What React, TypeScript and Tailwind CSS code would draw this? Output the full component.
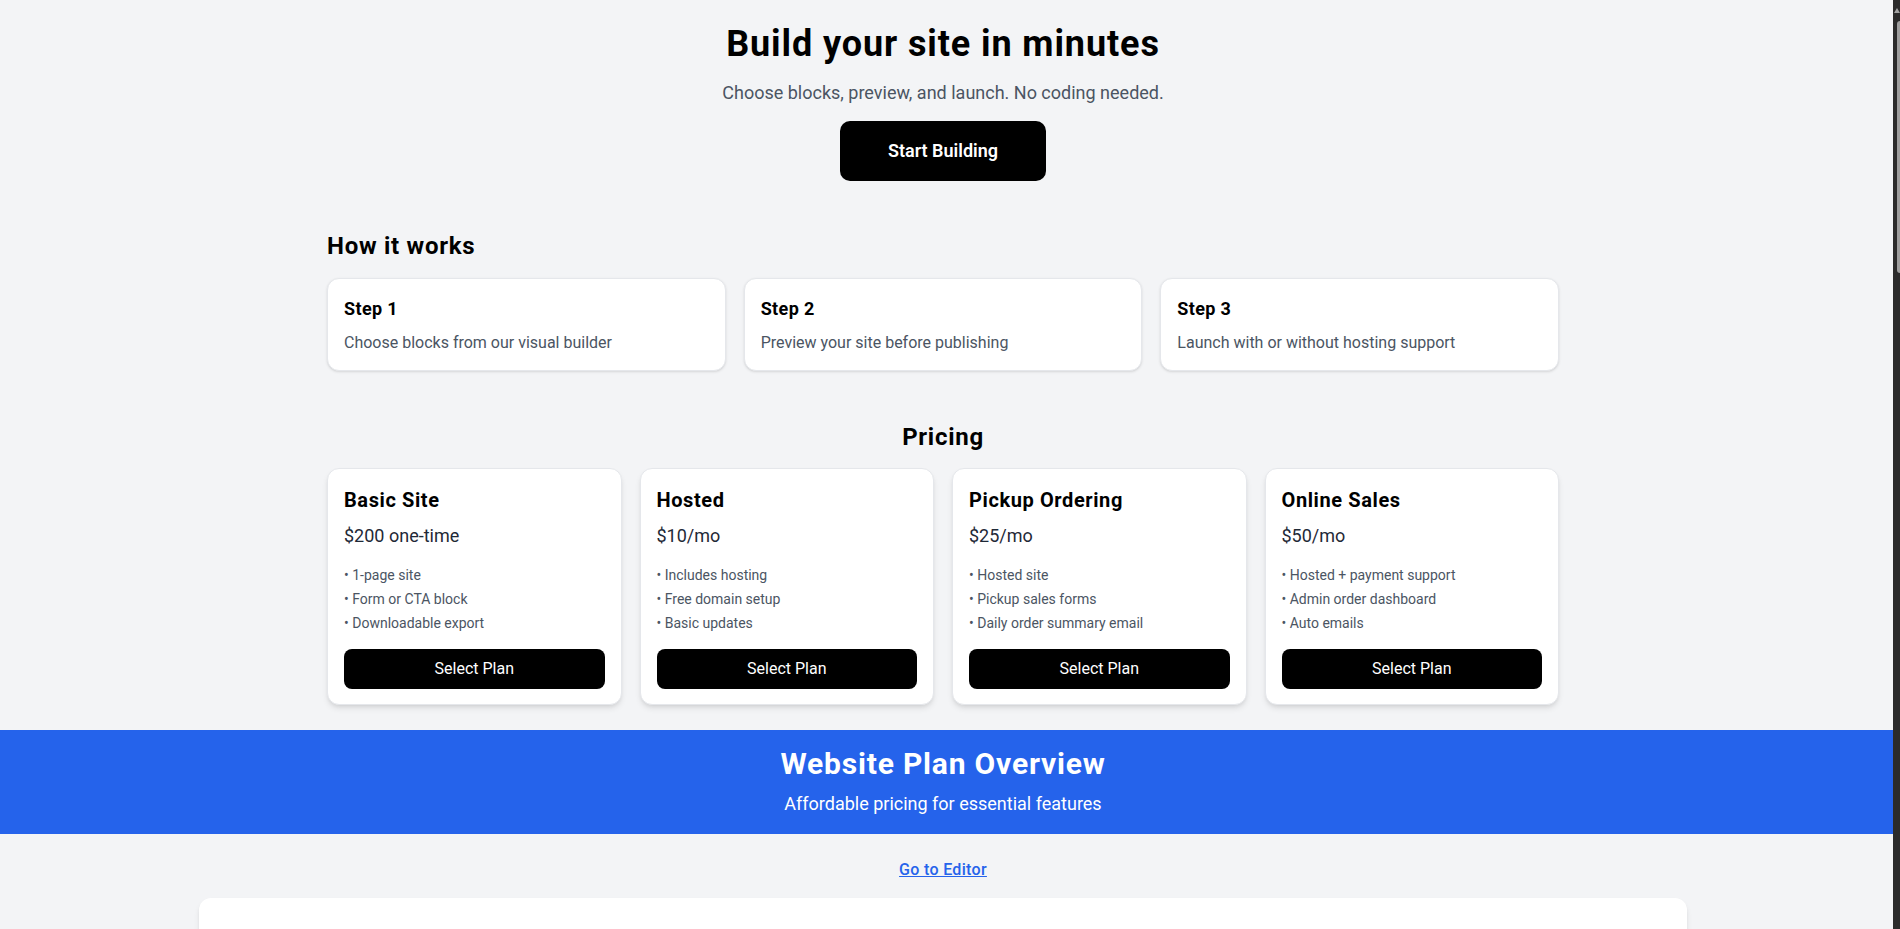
import React from "react";

const steps = [
  { title: "Step 1", desc: "Choose blocks from our visual builder" },
  { title: "Step 2", desc: "Preview your site before publishing" },
  { title: "Step 3", desc: "Launch with or without hosting support" },
];

const plans = [
  {
    name: "Basic Site",
    price: "$200 one-time",
    features: ["1-page site", "Form or CTA block", "Downloadable export"],
  },
  {
    name: "Hosted",
    price: "$10/mo",
    features: ["Includes hosting", "Free domain setup", "Basic updates"],
  },
  {
    name: "Pickup Ordering",
    price: "$25/mo",
    features: ["Hosted site", "Pickup sales forms", "Daily order summary email"],
  },
  {
    name: "Online Sales",
    price: "$50/mo",
    features: ["Hosted + payment support", "Admin order dashboard", "Auto emails"],
  },
];

export default function App() {
  return (
    <div className="flex h-screen w-full overflow-hidden bg-[#f3f4f6] font-['Segoe_UI',Roboto,sans-serif] text-black">
      <div className="min-w-0 flex-1 overflow-hidden">
        <main className="pr-[7px]">
          {/* Hero */}
          <section className="flex flex-col items-center pt-6 text-center">
            <h1 className="text-4xl font-bold tracking-[0.025em] text-black">
              Build your site in minutes
            </h1>
            <p className="mt-[15px] text-lg text-[#4b5563]">
              Choose blocks, preview, and launch. No coding needed.
            </p>
            <button className="mt-[14px] rounded-[10px] bg-black px-12 py-4 text-lg font-semibold text-white">
              Start Building
            </button>
          </section>

          {/* How it works */}
          <section className="mx-auto mt-[49px] max-w-7xl px-6">
            <h2 className="text-2xl font-bold tracking-[0.03em] text-black">How it works</h2>
            <div className="mt-4 grid grid-cols-3 gap-[18px]">
              {steps.map((s) => (
                <div
                  key={s.title}
                  className="rounded-xl border border-[#e5e7eb] bg-white px-4 pb-[15px] pt-4 shadow-sm"
                >
                  <h3 className="text-lg font-bold tracking-[0.02em] text-black">{s.title}</h3>
                  <p className="mt-2 text-base text-[#4b5563]">{s.desc}</p>
                </div>
              ))}
            </div>
          </section>

          {/* Pricing */}
          <section className="mx-auto mt-[50px] max-w-7xl px-6">
            <h2 className="text-center text-2xl font-bold tracking-[0.03em] text-black">Pricing</h2>
            <div className="mt-[15px] grid grid-cols-4 gap-[18px]">
              {plans.map((p) => (
                <div
                  key={p.name}
                  className="flex flex-col rounded-xl border border-[#e5e7eb] bg-white px-4 pb-[15px] pt-[17px] shadow-md"
                >
                  <h3 className="text-xl font-bold tracking-[0.03em] text-black">{p.name}</h3>
                  <p className="mt-2 text-lg text-[#1f2937]">{p.price}</p>
                  <ul className="mt-[15px] space-y-1 text-sm text-[#4b5563]">
                    {p.features.map((f) => (
                      <li key={f}>• {f}</li>
                    ))}
                  </ul>
                  <button className="mt-4 w-full rounded-lg bg-black py-2 text-base text-white">
                    Select Plan
                  </button>
                </div>
              ))}
            </div>
          </section>

          {/* Overview band */}
          <section className="mr-[-7px] mt-[25px] bg-[#2563eb] py-4 pr-[7px] text-center text-white">
            <h2 className="text-3xl font-bold tracking-[0.027em]">Website Plan Overview</h2>
            <p className="mt-2 text-lg">Affordable pricing for essential features</p>
          </section>

          <div className="mt-6 text-center">
            <a href="#" className="text-base font-medium tracking-[0.02em] text-[#2563eb] underline">
              Go to Editor
            </a>
          </div>

          <div className="mx-auto mt-4 h-[400px] max-w-[1536px] px-6">
            <div className="h-full rounded-xl bg-white shadow-md" />
          </div>
        </main>
      </div>

      {/* Scrollbar */}
      <div className="flex h-full w-[7px] shrink-0 flex-col items-end bg-[#2b2b2b]">
        <div className="mt-2 h-0 w-0 border-x-[3px] border-b-[5px] border-x-transparent border-b-[#a3a3a3]" />
        <div className="mt-2 h-[252px] w-[3px] rounded-l-sm bg-[#9e9e9e]" />
      </div>
    </div>
  );
}
